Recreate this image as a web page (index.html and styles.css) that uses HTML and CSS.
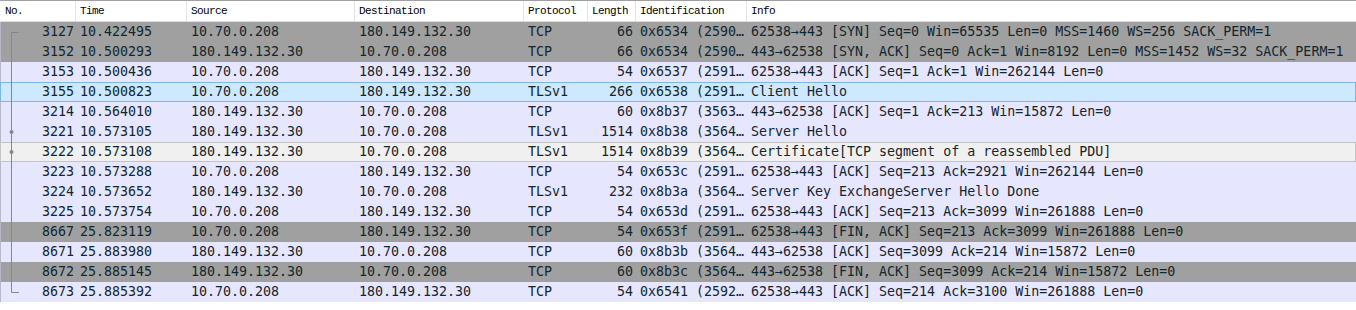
FILE: index.html
```html
<!DOCTYPE html>
<html lang="en">
<head>
    <meta charset="UTF-8">
    <title>Packet List</title>
    <link rel="stylesheet" href="styles.css">
</head>
<body>
    <div class="packet-list">
        <div class="list-header">
            <div class="col">No.</div>
            <div class="col">Time</div>
            <div class="col">Source</div>
            <div class="col">Destination</div>
            <div class="col">Protocol</div>
            <div class="col">Length</div>
            <div class="col">Identification</div>
            <div class="col">Info</div>
        </div>
        <div class="list-body" id="list-body">
            <!-- related packet tree in the No. column -->
            <svg class="related-tree" width="24" height="280" viewBox="0 0 24 280">
                <path d="M19 10.5 H11.5 V270.5 H19" fill="none" stroke="#7f8a92" stroke-width="1"/>
                <circle cx="11.5" cy="110" r="2" fill="#7f8a92"/>
                <circle cx="11.5" cy="130" r="2" fill="#7f8a92"/>
            </svg>
        </div>
    </div>

    <script>
        const packets = [
            ["3127", "10.422495", "10.70.0.208", "180.149.132.30", "TCP", "66", "0x6534 (2590…", "62538→443 [SYN] Seq=0 Win=65535 Len=0 MSS=1460 WS=256 SACK_PERM=1", "syn"],
            ["3152", "10.500293", "180.149.132.30", "10.70.0.208", "TCP", "66", "0x6534 (2590…", "443→62538 [SYN, ACK] Seq=0 Ack=1 Win=8192 Len=0 MSS=1452 WS=32 SACK_PERM=1", "syn"],
            ["3153", "10.500436", "10.70.0.208", "180.149.132.30", "TCP", "54", "0x6537 (2591…", "62538→443 [ACK] Seq=1 Ack=1 Win=262144 Len=0", "tcp"],
            ["3155", "10.500823", "10.70.0.208", "180.149.132.30", "TLSv1", "266", "0x6538 (2591…", "Client Hello", "selected"],
            ["3214", "10.564010", "180.149.132.30", "10.70.0.208", "TCP", "60", "0x8b37 (3563…", "443→62538 [ACK] Seq=1 Ack=213 Win=15872 Len=0", "tcp"],
            ["3221", "10.573105", "180.149.132.30", "10.70.0.208", "TLSv1", "1514", "0x8b38 (3564…", "Server Hello", "tcp"],
            ["3222", "10.573108", "180.149.132.30", "10.70.0.208", "TLSv1", "1514", "0x8b39 (3564…", "Certificate[TCP segment of a reassembled PDU]", "hover"],
            ["3223", "10.573288", "10.70.0.208", "180.149.132.30", "TCP", "54", "0x653c (2591…", "62538→443 [ACK] Seq=213 Ack=2921 Win=262144 Len=0", "tcp"],
            ["3224", "10.573652", "180.149.132.30", "10.70.0.208", "TLSv1", "232", "0x8b3a (3564…", "Server Key ExchangeServer Hello Done", "tcp"],
            ["3225", "10.573754", "10.70.0.208", "180.149.132.30", "TCP", "54", "0x653d (2591…", "62538→443 [ACK] Seq=213 Ack=3099 Win=261888 Len=0", "tcp"],
            ["8667", "25.823119", "10.70.0.208", "180.149.132.30", "TCP", "54", "0x653f (2591…", "62538→443 [FIN, ACK] Seq=213 Ack=3099 Win=261888 Len=0", "syn"],
            ["8671", "25.883980", "180.149.132.30", "10.70.0.208", "TCP", "60", "0x8b3b (3564…", "443→62538 [ACK] Seq=3099 Ack=214 Win=15872 Len=0", "tcp"],
            ["8672", "25.885145", "180.149.132.30", "10.70.0.208", "TCP", "60", "0x8b3c (3564…", "443→62538 [FIN, ACK] Seq=3099 Ack=214 Win=15872 Len=0", "syn"],
            ["8673", "25.885392", "10.70.0.208", "180.149.132.30", "TCP", "54", "0x6541 (2592…", "62538→443 [ACK] Seq=214 Ack=3100 Win=261888 Len=0", "tcp"]
        ];

        const body = document.getElementById('list-body');
        packets.forEach(p => {
            const row = document.createElement('div');
            row.className = `packet-row ${p[8]}`;
            for (let i = 0; i < 8; i++) {
                const cell = document.createElement('div');
                cell.className = 'cell';
                if (i === 0) cell.classList.add('num');
                if (i === 5) cell.classList.add('len');
                cell.textContent = p[i];
                row.appendChild(cell);
            }
            body.appendChild(row);
        });
    </script>
</body>
</html>
```

FILE: styles.css
```css
body {
    margin: 0;
    background-color: white;
    font-family: "DejaVu Sans Mono", monospace;
    color: #12272e;
}
.packet-list {
    width: 1356px;
}
.list-header,
.packet-row {
    display: grid;
    grid-template-columns: 76px 111px 168px 169px 64px 48px 111px 1fr;
}
.list-header {
    height: 20px;
    border-top: 1px solid #a0a0a0;
    border-bottom: 1px solid #dcdcdc;
    background-color: white;
    font-family: "Liberation Mono", monospace;
    font-size: 11px;
    letter-spacing: -0.6px;
    color: #000;
}
.list-header .col {
    line-height: 21px;
    padding-left: 4px;
    border-right: 1px solid #e3e3e3;
    white-space: nowrap;
    overflow: hidden;
}
.list-header .col:first-child {
    padding-left: 5px;
}
.list-header .col:last-child {
    border-right: none;
}
.list-body {
    position: relative;
}
.related-tree {
    position: absolute;
    left: 0;
    top: 0;
    z-index: 1;
}
.packet-row {
    height: 20px;
    font-size: 13.3px;
    line-height: 20px;
    box-sizing: border-box;
    border-left: 1px solid #b8b8c8;
}
.packet-row .cell {
    padding-left: 3px;
    white-space: nowrap;
    overflow: hidden;
}
.packet-row .num,
.packet-row .len {
    text-align: right;
    padding-left: 0;
    padding-right: 4px;
}
.packet-row .num {
    padding-right: 3px;
}
.packet-row.syn {
    background-color: #a0a0a0;
}
.packet-row.tcp {
    background-color: #e7e6ff;
}
.packet-row.selected {
    background-color: #cde8ff;
    border: 1px solid #7eb8e8;
    line-height: 18px;
}
.packet-row.hover {
    background-color: #f0f0f0;
    border: 1px solid #c4c4c4;
    line-height: 18px;
}
```
